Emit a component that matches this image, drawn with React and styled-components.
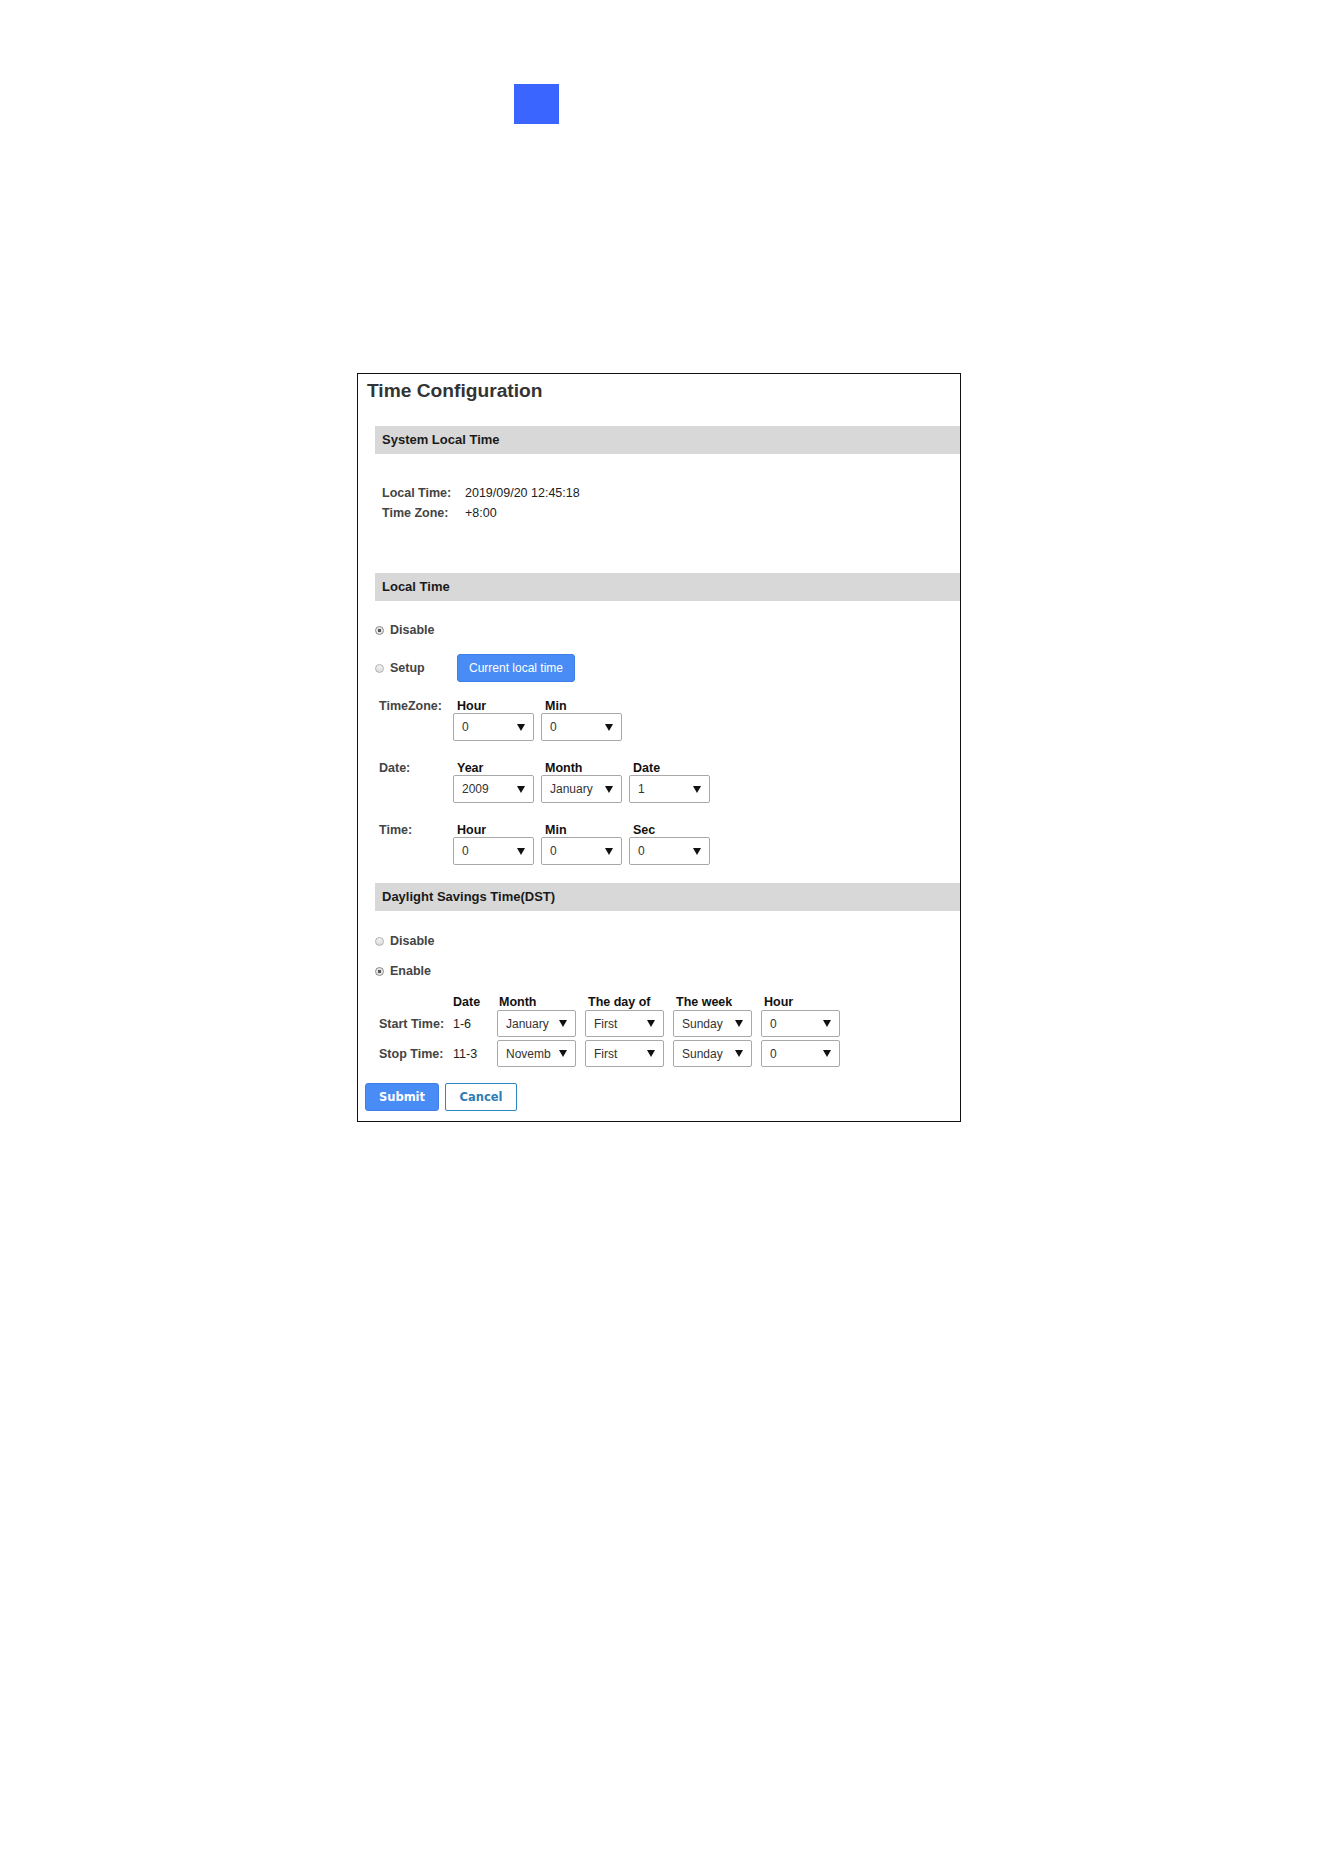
import React from "react";
import styled, { createGlobalStyle } from "styled-components";

const GlobalStyle = createGlobalStyle`
  body {
    margin: 0;
    background: #ffffff;
    font-family: "Liberation Sans", Arial, sans-serif;
  }
`;

const Page = styled.div`
  padding-top: 84px;
  padding-bottom: 200px;
`;

const Marker = styled.div`
  width: 45px;
  height: 40px;
  margin-left: 514px;
  background: #3a66ff;
`;

const Panel = styled.div`
  box-sizing: border-box;
  width: 604px;
  margin: 249px 0 0 357px;
  border: 1px solid #111;
  padding-bottom: 10px;
  color: #444;
  font-size: 12.5px;
`;

const Title = styled.h1`
  margin: 0;
  padding: 5px 9px 0;
  font-size: 19.2px;
  line-height: 23px;
  font-weight: bold;
  color: #333;
`;

const Band = styled.div`
  margin: ${(p) => p.$top}px 0 0 17px;
  height: 28px;
  line-height: 28px;
  padding-left: 7px;
  background: #d8d8d8;
  font-size: 13px;
  font-weight: bold;
  color: #1a1a1a;
`;

const InfoBlock = styled.div`
  margin-top: 29px;
  padding-left: 24px;
`;

const InfoRow = styled.div`
  display: flex;
  line-height: 20px;
`;

const InfoLabel = styled.span`
  width: 83px;
  font-weight: bold;
  color: #444;
`;

const InfoValue = styled.span`
  color: #222;
`;

const RadioRow = styled.div`
  display: flex;
  align-items: center;
  height: ${(p) => p.$h || 20}px;
  margin-top: ${(p) => p.$top}px;
  padding-left: 17px;
`;

const RadioOption = styled.label`
  display: flex;
  align-items: center;
  gap: 6px;
  width: ${(p) => (p.$width ? p.$width + "px" : "auto")};
  font-weight: bold;
  color: #444;
`;

const RadioDot = styled.span`
  box-sizing: border-box;
  width: 9px;
  height: 9px;
  border-radius: 50%;
  border: 1px solid ${(p) => (p.$checked ? "#8a8a8a" : "#b0b0b0")};
  background: ${(p) =>
    p.$checked
      ? "radial-gradient(circle, #555 0 1.6px, #e6e6e6 2px)"
      : "linear-gradient(#f4f4f4, #dcdcdc)"};
`;

const BlueButton = styled.button`
  box-sizing: border-box;
  height: 28px;
  width: ${(p) => (p.$width ? p.$width + "px" : "auto")};
  padding: 0 ${(p) => (p.$width ? 0 : 11)}px;
  border: 1px solid #3f7de8;
  border-radius: 3px;
  background: #4a8cf5;
  color: #fff;
  font-family: ${(p) =>
    p.$strong ? '"DejaVu Sans", Verdana, sans-serif' : '"Liberation Sans", Arial, sans-serif'};
  font-size: ${(p) => (p.$strong ? "11.5px" : "12px")};
  font-weight: ${(p) => (p.$strong ? "bold" : "normal")};
  cursor: pointer;
`;

const OutlineButton = styled.button`
  box-sizing: border-box;
  height: 28px;
  width: 72px;
  border: 1px solid #2a86c4;
  border-radius: 2px;
  background: #fff;
  color: #2f7db5;
  font-family: "DejaVu Sans", Verdana, sans-serif;
  font-size: 11.5px;
  font-weight: bold;
  cursor: pointer;
`;

const FieldRow = styled.div`
  display: flex;
  align-items: flex-start;
  margin-top: ${(p) => p.$top}px;
  padding-left: 21px;
`;

const RowLabel = styled.div`
  width: 74px;
  padding-top: 3px;
  line-height: 13px;
  font-weight: bold;
  color: #444;
`;

const Fields = styled.div`
  display: flex;
  gap: 7px;
`;

const Field = styled.div`
  display: flex;
  flex-direction: column;
`;

const FieldHead = styled.div`
  padding: 3px 0 0 4px;
  line-height: 13px;
  font-weight: bold;
  color: #111;
`;

const SelectBox = styled.div`
  box-sizing: border-box;
  display: flex;
  align-items: center;
  justify-content: space-between;
  width: ${(p) => p.$width}px;
  height: ${(p) => p.$height}px;
  padding: 0 8px;
  border: 1px solid #a9a9a9;
  border-radius: 2px;
  background: #fff;
  font-size: 12px;
  color: #333;
  white-space: nowrap;
  overflow: hidden;
`;

const DstGrid = styled.div`
  display: grid;
  grid-template-columns: 65px 35px repeat(4, 79px);
  column-gap: 9px;
  row-gap: 3px;
  align-items: center;
  margin-top: 14px;
  padding-left: 21px;
`;

const GridHead = styled.div`
  line-height: 15px;
  margin-bottom: -3px;
  padding-left: ${(p) => p.$pad || 0}px;
  font-weight: bold;
  color: #111;
  white-space: nowrap;
`;

const GridLabel = styled.div`
  font-weight: bold;
  color: #444;
  white-space: nowrap;
`;

const GridValue = styled.div`
  color: #222;
`;

const Actions = styled.div`
  display: flex;
  gap: 6px;
  margin-top: 16px;
  padding-left: 7px;
`;

const Arrow = () => (
  <svg width="8" height="7" viewBox="0 0 8 7">
    <polygon points="0,0 8,0 4,7" fill="#111" />
  </svg>
);

const Select = ({ value, width = 81, height = 28 }) => (
  <SelectBox $width={width} $height={height}>
    <span>{value}</span>
    <Arrow />
  </SelectBox>
);

const FormGroup = ({ label, top, items }) => (
  <FieldRow $top={top}>
    <RowLabel>{label}</RowLabel>
    <Fields>
      {items.map(([head, value]) => (
        <Field key={head}>
          <FieldHead>{head}</FieldHead>
          <Select value={value} />
        </Field>
      ))}
    </Fields>
  </FieldRow>
);

const Radio = ({ checked, label, width }) => (
  <RadioOption $width={width}>
    <RadioDot $checked={checked} />
    {label}
  </RadioOption>
);

const dstRows = [
  { label: "Start Time:", date: "1-6", month: "January", day: "First", week: "Sunday", hour: "0" },
  { label: "Stop Time:", date: "11-3", month: "Novemb", day: "First", week: "Sunday", hour: "0" },
];

export default function App() {
  return (
    <>
      <GlobalStyle />
      <Page>
        <Marker />
        <Panel>
          <Title>Time Configuration</Title>

          <Band $top={24}>System Local Time</Band>
          <InfoBlock>
            <InfoRow>
              <InfoLabel>Local Time:</InfoLabel>
              <InfoValue>2019/09/20 12:45:18</InfoValue>
            </InfoRow>
            <InfoRow>
              <InfoLabel>Time Zone:</InfoLabel>
              <InfoValue>+8:00</InfoValue>
            </InfoRow>
          </InfoBlock>

          <Band $top={50}>Local Time</Band>
          <RadioRow $top={15} $h={28}>
            <Radio checked label="Disable" />
          </RadioRow>
          <RadioRow $top={10} $h={28}>
            <Radio label="Setup" width={82} />
            <BlueButton>Current local time</BlueButton>
          </RadioRow>

          <FormGroup label="TimeZone:" top={15} items={[["Hour", "0"], ["Min", "0"]]} />
          <FormGroup
            label="Date:"
            top={18}
            items={[["Year", "2009"], ["Month", "January"], ["Date", "1"]]}
          />
          <FormGroup
            label="Time:"
            top={18}
            items={[["Hour", "0"], ["Min", "0"], ["Sec", "0"]]}
          />

          <Band $top={18}>Daylight Savings Time(DST)</Band>
          <RadioRow $top={20}>
            <Radio label="Disable" />
          </RadioRow>
          <RadioRow $top={10}>
            <Radio checked label="Enable" />
          </RadioRow>

          <DstGrid>
            <div />
            <GridHead>Date</GridHead>
            <GridHead $pad={2}>Month</GridHead>
            <GridHead $pad={3}>The day of</GridHead>
            <GridHead $pad={3}>The week</GridHead>
            <GridHead $pad={3}>Hour</GridHead>
            {dstRows.map((r) => (
              <React.Fragment key={r.label}>
                <GridLabel>{r.label}</GridLabel>
                <GridValue>{r.date}</GridValue>
                <Select value={r.month} width={79} height={27} />
                <Select value={r.day} width={79} height={27} />
                <Select value={r.week} width={79} height={27} />
                <Select value={r.hour} width={79} height={27} />
              </React.Fragment>
            ))}
          </DstGrid>

          <Actions>
            <BlueButton $strong $width={74}>
              Submit
            </BlueButton>
            <OutlineButton>Cancel</OutlineButton>
          </Actions>
        </Panel>
      </Page>
    </>
  );
}
